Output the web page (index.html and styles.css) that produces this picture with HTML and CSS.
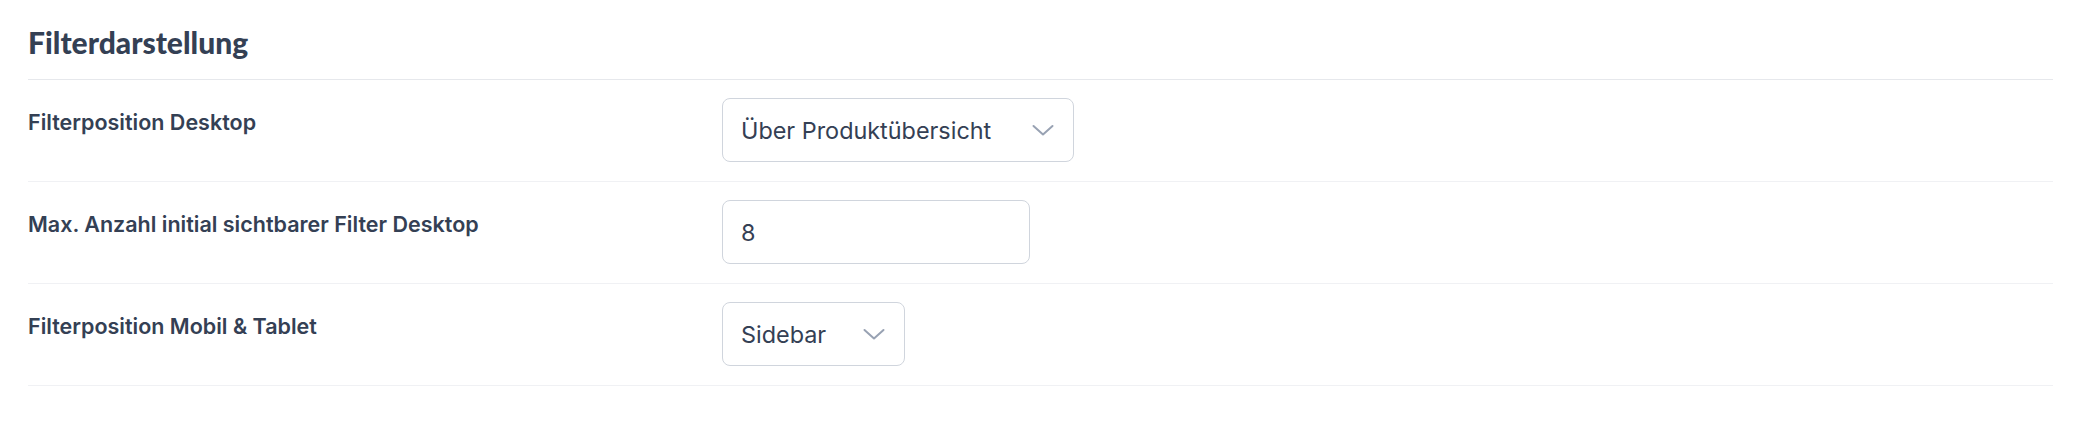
FILE: index.html
```html
<!DOCTYPE html>
<html lang="de">
<head>
<meta charset="utf-8">
<title>Filterdarstellung</title>
<link rel="stylesheet" href="styles.css">
</head>
<body>
<section class="panel">
  <h2 class="panel-title">Filterdarstellung</h2>
  <div class="row">
    <div class="label">Filterposition Desktop</div>
    <div class="control">
      <div class="select select-wide">
        <span class="value">Über Produktübersicht</span>
        <svg class="chevron" viewBox="0 0 22 22" width="22" height="22"><path d="M1.5 7l9.5 8.5L20.5 7" fill="none" stroke="currentColor" stroke-width="2" stroke-linecap="round" stroke-linejoin="round"/></svg>
      </div>
    </div>
  </div>
  <div class="row">
    <div class="label">Max. Anzahl initial sichtbarer Filter Desktop</div>
    <div class="control">
      <div class="input"><span class="value">8</span></div>
    </div>
  </div>
  <div class="row">
    <div class="label">Filterposition Mobil &amp; Tablet</div>
    <div class="control">
      <div class="select select-small">
        <span class="value">Sidebar</span>
        <svg class="chevron" viewBox="0 0 22 22" width="22" height="22"><path d="M1.5 7l9.5 8.5L20.5 7" fill="none" stroke="currentColor" stroke-width="2" stroke-linecap="round" stroke-linejoin="round"/></svg>
      </div>
    </div>
  </div>
</section>
</body>
</html>
```
FILE: styles.css
```css
html, body {
  margin: 0;
  padding: 0;
  background: #ffffff;
}

body {
  font-family: Inter, "Noto Sans", sans-serif;
  color: #344054;
}

.panel {
  padding: 0 23px 0 28px;
}

.panel-title {
  margin: 0;
  height: 80px;
  box-sizing: border-box;
  padding-top: 24px;
  font-family: Lato, "Open Sans", sans-serif;
  font-weight: 900;
  font-size: 30px;
  line-height: 36px;
  color: #344054;
  border-bottom: 1px solid #e6e8ec;
}

.row {
  display: grid;
  grid-template-columns: 694px 1fr;
  padding: 18px 0 19px;
  border-bottom: 1px solid #f0f1f4;
}

.label {
  padding-top: 10px;
  font-size: 21.5px;
  line-height: 28px;
  font-weight: 600;
  color: #344054;
}

.control {
  display: flex;
}

.select, .input {
  box-sizing: border-box;
  height: 64px;
  border: 1px solid #d0d5dd;
  border-radius: 8px;
  display: flex;
  align-items: center;
  padding: 0 19px 0 18px;
  font-size: 23.4px;
  color: #344054;
}

.select {
  justify-content: space-between;
}

.select-wide { width: 352px; }
.select-small { width: 183px; }
.input { width: 308px; }

.chevron {
  color: #98a2b3;
  flex: none;
}
```
